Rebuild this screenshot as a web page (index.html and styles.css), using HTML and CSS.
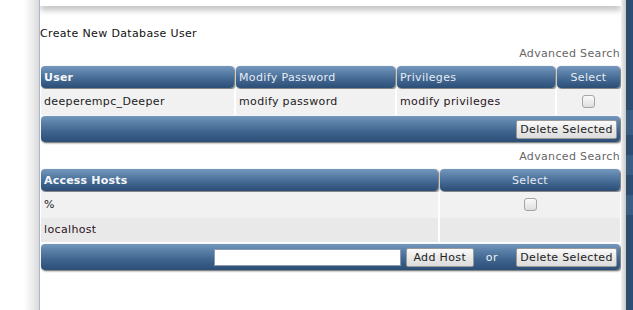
FILE: index.html
```html
<!DOCTYPE html>
<html>
<head>
<meta charset="utf-8">
<link rel="stylesheet" href="styles.css">
</head>
<body>
<div class="page">
  <div class="gutter"></div>
  <div class="main">
    <div class="topbar"></div>
    <div class="content">
      <div class="create">Create New Database User</div>
      <div class="adv">Advanced Search</div>
      <div class="grid users head">
        <div class="hcell bold">User</div>
        <div class="hcell">Modify Password</div>
        <div class="hcell">Privileges</div>
        <div class="hcell center">Select</div>
      </div>
      <div class="grid users row odd">
        <div class="cell">deeperempc_Deeper</div>
        <div class="cell">modify password</div>
        <div class="cell link">modify privileges</div>
        <div class="cell center"><span class="chk"></span></div>
      </div>
      <div class="bar">
        <button class="btn">Delete Selected</button>
      </div>
      <div class="adv adv2">Advanced Search</div>
      <div class="grid hosts head">
        <div class="hcell bold">Access Hosts</div>
        <div class="hcell center">Select</div>
      </div>
      <div class="grid hosts row odd">
        <div class="cell">%</div>
        <div class="cell center"><span class="chk"></span></div>
      </div>
      <div class="grid hosts row even">
        <div class="cell link">localhost</div>
        <div class="cell"></div>
      </div>
      <div class="bar">
        <input class="field" type="text">
        <button class="btn add">Add Host</button>
        <span class="or">or</span>
        <button class="btn">Delete Selected</button>
      </div>
    </div>
  </div>
  <div class="rshadow"></div>
  <div class="rstrip">
    <div class="blk b1"></div>
    <div class="blk b2"></div>
    <div class="blk b3"></div>
  </div>
</div>
</body>
</html>
```
FILE: styles.css
```css
html, body {
  margin: 0;
  padding: 0;
  background: #fff;
}
body {
  font-family: "DejaVu Sans", Verdana, sans-serif;
  font-size: 11px;
  color: #222;
  letter-spacing: 0.35px;
}
.page {
  display: flex;
  height: 310px;
  width: 633px;
  overflow: hidden;
}
.gutter {
  width: 39px;
  flex: none;
  background: linear-gradient(to right, #ffffff 0, #ffffff 24px, #ebebeb 33px, #d9d9d9 39px);
}
.main {
  width: 581px;
  flex: none;
  border-left: 1px solid #aab8cc;
  background: #fff;
  position: relative;
  overflow: hidden;
}
.topbar {
  height: 6px;
  background: #fff;
  box-shadow: 0 3px 7px rgba(0,0,0,0.35);
  position: relative;
  z-index: 1;
}
.content {
  padding: 0 0 0 1px;
}
.create {
  margin-top: 21px;
  margin-left: -1px;
  line-height: 13px;
  color: #111;
}
.adv {
  text-align: right;
  color: #666;
  line-height: 13px;
  margin-top: 7px;
  padding-right: 1px;
}
.adv2 {
  margin-top: 8px;
}
.grid {
  display: grid;
  column-gap: 2px;
  width: 579px;
}
.users {
  grid-template-columns: 193px 159px 158px 63px;
}
.hosts {
  grid-template-columns: 397px 180px;
}
.head {
  margin-top: 6px;
  height: 22px;
}
.hcell {
  border-radius: 4px;
  background: linear-gradient(#7497bd 0, #5b80a8 30%, #3f648e 65%, #2c4e76 100%);
  box-shadow: 1px 1px 2px rgba(0,0,0,0.65);
  color: #e6edf5;
  line-height: 22px;
  padding: 1px 0 0 3px;
  box-sizing: border-box;
  white-space: nowrap;
  overflow: hidden;
}
.hcell.bold {
  font-weight: bold;
  color: #f4f7fa;
  letter-spacing: 0.2px;
}
.hcell.center, .cell.center {
  text-align: center;
  padding-left: 0;
}
.row {
  height: 25px;
  margin-top: 1px;
}
.row.even {
  height: 24px;
}
.row.odd .cell {
  background: #f1f1f1;
}
.row.even .cell {
  background: #e9e9e9;
}
.cell {
  line-height: 26px;
  padding-left: 3px;
  color: #222;
  white-space: nowrap;
}
.row.even .cell {
  line-height: 24px;
}
.cell.link {
  color: #2a1424;
}
.chk {
  display: inline-block;
  width: 11px;
  height: 11px;
  border: 1px solid #a5a5a5;
  border-radius: 3px;
  background: linear-gradient(#fafafa, #dedede);
  vertical-align: middle;
  margin-top: -2px;
}
.bar {
  margin-top: 2px;
  width: 579px;
  height: 26px;
  border-radius: 4px;
  background: linear-gradient(#7497bd 0, #5b80a8 25%, #3f648e 60%, #2c4e76 100%);
  box-shadow: 1px 1px 2px rgba(0,0,0,0.65);
  display: flex;
  align-items: center;
  justify-content: flex-end;
  padding-right: 3px;
  box-sizing: border-box;
}
.btn {
  font-family: "DejaVu Sans", Verdana, sans-serif;
  font-size: 11px;
  color: #222;
  height: 19px;
  padding: 0;
  border: 1px solid #9a9a9a;
  border-radius: 2px;
  background: linear-gradient(#fbfbfb, #e9e9e9 50%, #dcdcdc);
  letter-spacing: 0.35px;
  width: 101px;
  white-space: nowrap;
  text-align: center;
}
.btn.add {
  width: 68px;
  margin-left: 5px;
}
.field {
  width: 187px;
  height: 17px;
  box-sizing: border-box;
  border: 1px solid #8a9bb0;
  background: #fff;
  padding: 0;
}
.or {
  color: #eef3f8;
  margin-left: 12px;
  margin-right: 18px;
  letter-spacing: 0.5px;
}
.rshadow {
  width: 5px;
  flex: none;
  background: linear-gradient(to right, #f2f2f2, #c9c9c9);
}
.rstrip {
  width: 7px;
  flex: none;
  background: #2c4d70;
  display: flex;
  flex-direction: column;
}
.blk {
  background: #3a5d82;
}
.b1 { margin-top: 110px; height: 25px; }
.b2 { margin-top: 20px; height: 20px; }
.b3 { margin-top: 20px; height: 20px; }
```
